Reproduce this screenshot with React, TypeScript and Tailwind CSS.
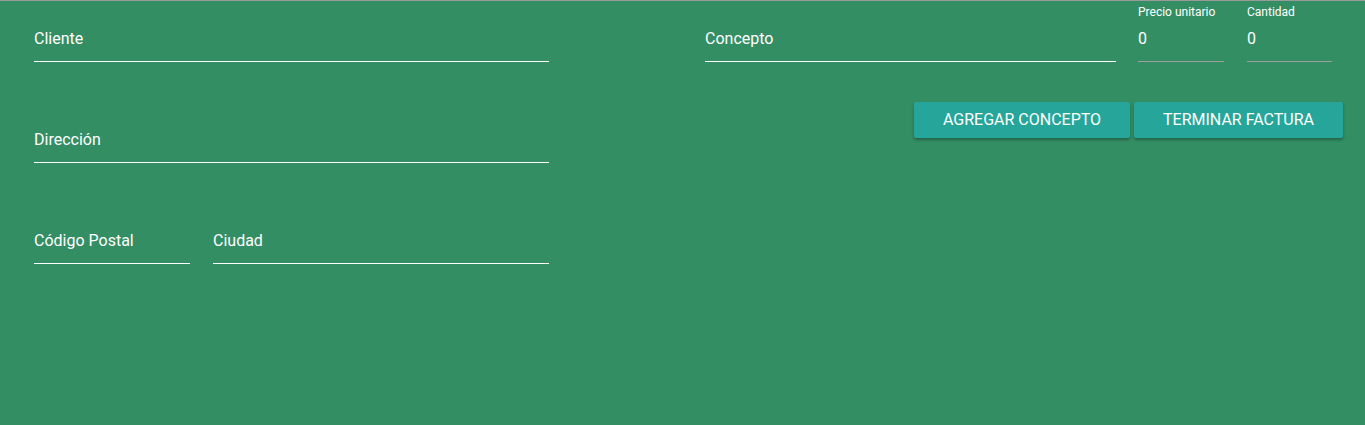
import React from 'react';

function Field({ label, className = '' }: { label: string; className?: string }) {
  return (
    <div className={`h-12 border-b border-white flex items-end pb-[13px] ${className}`}>
      <span className="text-[16px] leading-[19px] text-white">{label}</span>
    </div>
  );
}

function NumberField({ label, className = '' }: { label: string; className?: string }) {
  return (
    <div className={`relative h-12 border-b border-[#9e9e9e] flex items-end pb-[13px] ${className}`}>
      <span className="absolute left-0 top-[-9px] text-[12px] leading-[14px] text-white">{label}</span>
      <span className="text-[16px] leading-[19px] text-white">0</span>
    </div>
  );
}

export default function App() {
  return (
    <div
      className="w-[1365px] h-[425px] bg-[#338e64] border-t border-[#9a9a9a] pt-[13px] flex"
      style={{ fontFamily: 'Roboto, "Liberation Sans", sans-serif' }}
    >
      <div className="ml-[34px] w-[515px] flex flex-col gap-[53px]">
        <Field label="Cliente" />
        <Field label="Dirección" />
        <div className="flex gap-[23px]">
          <Field label="Código Postal" className="w-[156px]" />
          <Field label="Ciudad" className="flex-1" />
        </div>
      </div>

      <div className="ml-[156px] w-[638px] flex flex-col">
        <div className="flex">
          <Field label="Concepto" className="w-[411px]" />
          <NumberField label="Precio unitario" className="ml-[22px] w-[86px]" />
          <NumberField label="Cantidad" className="ml-[23px] w-[85px]" />
        </div>
        <div className="mt-[40px] flex justify-end gap-[4px]">
          <button className="h-9 w-[216px] rounded-[2px] bg-[#26a69a] text-white text-[16px] uppercase shadow-[0_2px_3px_rgba(0,0,0,0.3)]">
            Agregar concepto
          </button>
          <button className="h-9 w-[209px] rounded-[2px] bg-[#26a69a] text-white text-[16px] uppercase shadow-[0_2px_3px_rgba(0,0,0,0.3)]">
            Terminar factura
          </button>
        </div>
      </div>
    </div>
  );
}
